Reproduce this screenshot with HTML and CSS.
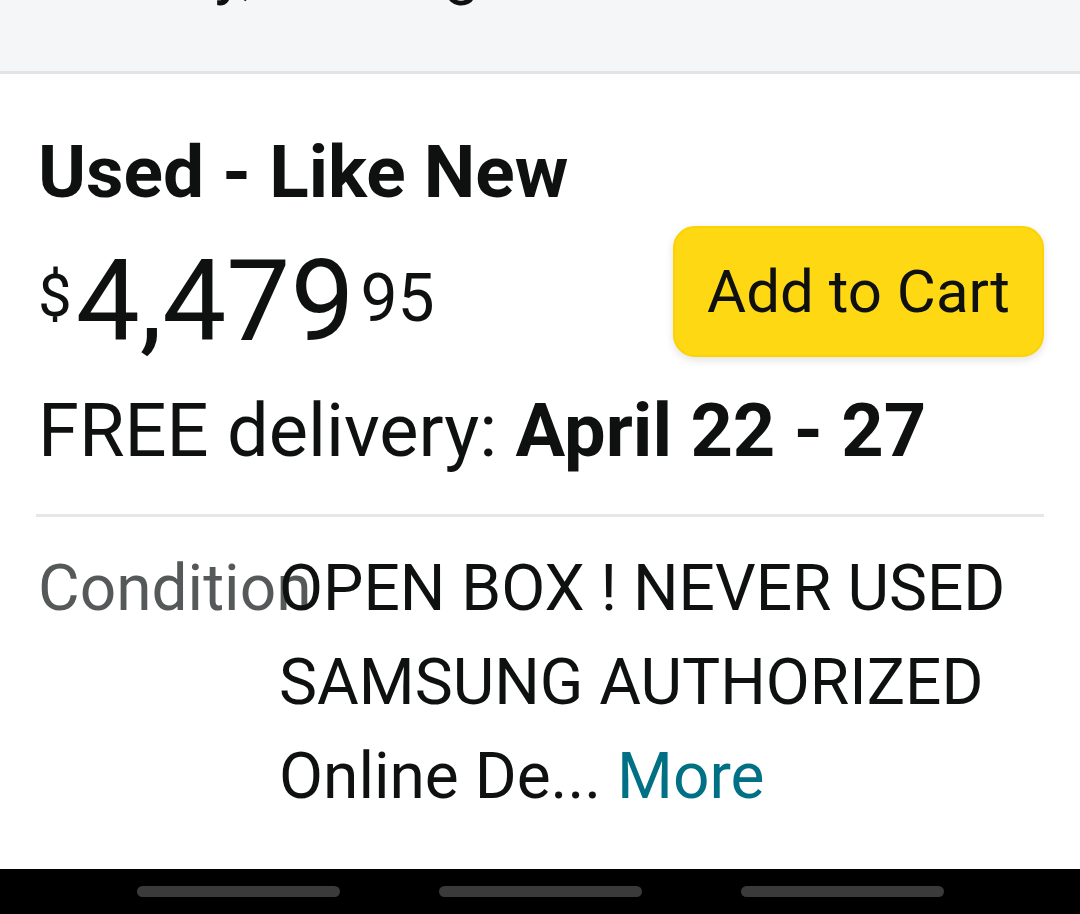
FILE: index.html
```html
<!DOCTYPE html>
<html lang="en">
<head>
<meta charset="utf-8">
<title>Used - Like New</title>
<link rel="stylesheet" href="styles.css">
</head>
<body>
<div class="screen">
  <div class="prev-section">
    <div class="prev-text">Quickly, reusing</div>
  </div>
  <main class="offer">
    <h1 class="condition-title">Used - Like New</h1>
    <div class="price-row">
      <div class="price">
        <span class="price-symbol">$</span><span class="price-whole">4,479</span><span class="price-fraction">95</span>
      </div>
      <button class="cart-btn" type="button">Add to Cart</button>
    </div>
    <p class="delivery">FREE delivery: <strong>April 22 - 27</strong></p>
    <hr class="divider">
    <div class="detail-row">
      <span class="detail-label">Condition</span>
      <span class="detail-value">OPEN BOX ! NEVER USED<br>SAMSUNG AUTHORIZED<br>Online De... <a class="more-link" href="#">More</a></span>
    </div>
  </main>
  <nav class="nav-bar">
    <span class="nav-pill"></span>
    <span class="nav-pill"></span>
    <span class="nav-pill"></span>
  </nav>
</div>
</body>
</html>
```
FILE: styles.css
```css
* { box-sizing: border-box; }
html, body { margin: 0; padding: 0; }
body {
  font-family: Roboto, "Noto Sans", sans-serif;
  color: #0f1111;
  background: #ffffff;
}
.screen {
  width: 1080px;
  height: 914px;
  display: flex;
  flex-direction: column;
  overflow: hidden;
}
.prev-section {
  height: 74px;
  flex: none;
  background: #f5f6f7;
  border-bottom: 3px solid #e3e4e5;
  overflow: hidden;
  padding-left: 38px;
}
.prev-text {
  font-size: 64px;
  line-height: 94px;
  margin-top: -76px;
}
.offer {
  flex: 1;
  padding: 56px 36px 0 38px;
}
.condition-title {
  margin: 0;
  font-size: 73px;
  line-height: 84px;
  font-weight: 700;
}
.price-row {
  margin-top: 12px;
  display: flex;
  justify-content: space-between;
  align-items: flex-start;
}
.price {
  display: flex;
  align-items: flex-start;
}
.price-symbol {
  font-size: 60px;
  line-height: 1;
  margin-top: 40px;
  margin-right: 4px;
}
.price-whole {
  font-size: 114px;
  line-height: 1;
  margin-top: 18px;
}
.price-fraction {
  font-size: 66px;
  line-height: 1;
  margin-top: 40px;
  margin-left: 6px;
}
.cart-btn {
  width: 371px;
  height: 131px;
  border-radius: 22px;
  background: #ffd814;
  border: 2px solid #fcd200;
  box-shadow: 0 3px 8px rgba(15, 17, 17, 0.12);
  font-family: inherit;
  font-size: 60px;
  color: #0f1111;
  padding: 0;
  cursor: pointer;
}
.delivery {
  margin: 31px 0 0;
  font-size: 74px;
  line-height: 84px;
}
.delivery strong { font-weight: 700; }
.divider {
  margin: 41px 0 0 -2px;
  border: none;
  height: 3px;
  background: #e7e7e7;
}
.detail-row {
  margin-top: 25px;
  display: grid;
  grid-template-columns: 241px 1fr;
  font-size: 64px;
  line-height: 94px;
}
.detail-label {
  color: #565959;
  white-space: nowrap;
}
.detail-value { color: #0f1111; }
.more-link {
  color: #007185;
  text-decoration: none;
}
.nav-bar {
  height: 45px;
  flex: none;
  background: #000000;
  display: flex;
  justify-content: center;
  align-items: center;
  gap: 99px;
  padding-bottom: 1px;
}
.nav-pill {
  width: 203px;
  height: 11px;
  border-radius: 6px;
  background: #3a3a3a;
}
```
